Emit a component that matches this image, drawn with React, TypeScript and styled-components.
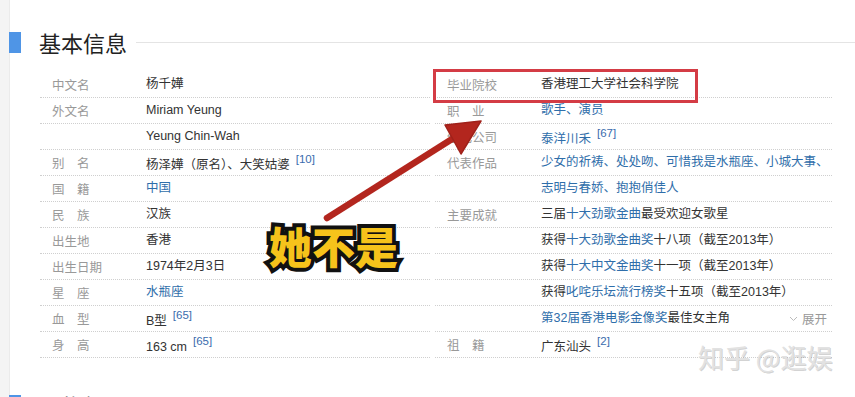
import styled, { createGlobalStyle } from "styled-components";

type Seg = { t: string; link?: boolean };
interface InfoRow {
  label: string;
  value: Seg[];
  ref?: string;
  expand?: boolean;
}

const leftRows: InfoRow[] = [
  { label: "中文名", value: [{ t: "杨千嬅" }] },
  { label: "外文名", value: [{ t: "Miriam Yeung" }] },
  { label: "", value: [{ t: "Yeung Chin-Wah" }] },
  { label: "别　名", value: [{ t: "杨泽嬅（原名）、大笑姑婆" }], ref: "10" },
  { label: "国　籍", value: [{ t: "中国", link: true }] },
  { label: "民　族", value: [{ t: "汉族" }] },
  { label: "出生地", value: [{ t: "香港" }] },
  { label: "出生日期", value: [{ t: "1974年2月3日" }] },
  { label: "星　座", value: [{ t: "水瓶座", link: true }] },
  { label: "血　型", value: [{ t: "B型" }], ref: "65" },
  { label: "身　高", value: [{ t: "163 cm" }], ref: "65" },
];

const rightRows: InfoRow[] = [
  { label: "毕业院校", value: [{ t: "香港理工大学社会科学院" }] },
  { label: "职　业", value: [{ t: "歌手、演员", link: true }] },
  { label: "经纪公司", value: [{ t: "泰洋川禾", link: true }], ref: "67" },
  {
    label: "代表作品",
    value: [{ t: "少女的祈祷、处处吻、可惜我是水瓶座、小城大事、", link: true }],
  },
  { label: "", value: [{ t: "志明与春娇、抱抱俏佳人", link: true }] },
  {
    label: "主要成就",
    value: [{ t: "三届" }, { t: "十大劲歌金曲", link: true }, { t: "最受欢迎女歌星" }],
  },
  {
    label: "",
    value: [{ t: "获得" }, { t: "十大劲歌金曲奖", link: true }, { t: "十八项（截至2013年）" }],
  },
  {
    label: "",
    value: [{ t: "获得" }, { t: "十大中文金曲奖", link: true }, { t: "十一项（截至2013年）" }],
  },
  {
    label: "",
    value: [{ t: "获得" }, { t: "叱咤乐坛流行榜奖", link: true }, { t: "十五项（截至2013年）" }],
  },
  {
    label: "",
    value: [{ t: "第32届香港电影金像奖", link: true }, { t: "最佳女主角" }],
    expand: true,
  },
  { label: "祖　籍", value: [{ t: "广东汕头" }], ref: "2" },
];

const InfoTable = ({ rows }: { rows: InfoRow[] }) => (
  <TableColumn>
    {rows.map((row, i) => (
      <Row key={i}>
        <Label>{row.label}</Label>
        <Value>
          <ValueText>
            {row.value.map((seg, j) =>
              seg.link ? <Link key={j}>{seg.t}</Link> : <span key={j}>{seg.t}</span>
            )}
            {row.ref && <Ref>[{row.ref}]</Ref>}
          </ValueText>
          {row.expand && (
            <Expand>
              <svg width="9" height="6" viewBox="0 0 9 6">
                <path d="M1 1 L4.5 4.5 L8 1" fill="none" stroke="#bbb" strokeWidth="1" />
              </svg>
              展开
            </Expand>
          )}
        </Value>
      </Row>
    ))}
  </TableColumn>
);

const App = () => {
  return (
    <>
      <GlobalStyle />
      <Page>
        <Gutter />
        <Main>
          <TitleRow>
            <Marker />
            <Title>基本信息</Title>
            <Rule />
          </TitleRow>
          <TableGrid>
            <InfoTable rows={leftRows} />
            <InfoTable rows={rightRows} />
          </TableGrid>
          <TitleRow $spaced>
            <Marker />
            <Title>人物经历</Title>
            <Rule />
          </TitleRow>
        </Main>

        <HighlightBox />
        <ArrowLayer viewBox="0 0 855 397" width="855" height="397">
          <line x1="327" y1="218" x2="460" y2="134" stroke="#b3261e" strokeWidth="6.5" strokeLinecap="round" />
          <polygon points="481,121 445,125 461,154" fill="#b3261e" stroke="#a0211a" strokeWidth="1.5" strokeLinejoin="round" />
        </ArrowLayer>
        <Caption>她不是</Caption>
        <Watermark>知乎 @逛娱</Watermark>
      </Page>
    </>
  );
};

const GlobalStyle = createGlobalStyle`
  html, body {
    margin: 0;
    padding: 0;
    background: #fff;
  }
  body {
    font-family: Arial, "Liberation Sans", "Noto Sans CJK SC", sans-serif;
    overflow: hidden;
  }
`;

const Page = styled.div`
  position: relative;
  display: flex;
  width: 855px;
  height: 397px;
  overflow: hidden;
  background: #fff;
`;

const Gutter = styled.div`
  flex-shrink: 0;
  width: 9px;
  background-color: #f4f4f4;
  border-right: 1px solid #ebebeb;
`;

const Main = styled.div`
  flex: 1;
  padding-top: 30px;
`;

const TitleRow = styled.div<{ $spaced?: boolean }>`
  display: flex;
  align-items: center;
  height: 24px;
  margin-top: ${(p) => (p.$spaced ? "35px" : "0")};
`;

const Marker = styled.div`
  width: 12px;
  height: 21px;
  margin-left: -1px;
  background-color: #4f95e6;
`;

const Title = styled.h2`
  margin: 0 9px 0 18px;
  font-family: "Noto Sans CJK SC", sans-serif;
  font-size: 22px;
  font-weight: 400;
  line-height: 24px;
  color: #222;
`;

const Rule = styled.div`
  flex: 1;
  height: 1px;
  background-color: #e4e4e4;
`;

const TableGrid = styled.div`
  display: grid;
  grid-template-columns: 390px 397px;
  column-gap: 5px;
  margin: 18px 0 0 30px;
`;

const TableColumn = styled.div`
  display: flex;
  flex-direction: column;
`;

const Row = styled.div`
  display: flex;
  align-items: center;
  height: 25px;
  padding-top: 1px;
  box-sizing: content-box;
  margin-top: -1px;
  border-bottom: 1px dotted #cfcfcf;
  font-size: 12.5px;
`;

const Label = styled.div`
  flex-shrink: 0;
  width: 94px;
  padding-left: 12px;
  color: #999;
  font-family: "Noto Sans CJK SC", sans-serif;
  white-space: nowrap;
`;

const Value = styled.div`
  flex: 1;
  display: flex;
  align-items: center;
  color: #333;
  white-space: nowrap;
`;

const ValueText = styled.span`
  line-height: 25px;
`;

const Link = styled.span`
  color: #2f6eaa;
`;

const Ref = styled.span`
  margin-left: 6px;
  font-size: 11.5px;
  color: #3a6cae;
  vertical-align: 6px;
`;

const Expand = styled.span`
  display: flex;
  align-items: center;
  gap: 4px;
  margin-left: auto;
  padding-right: 5px;
  color: #999;
  font-size: 12.5px;
`;

const HighlightBox = styled.div`
  position: absolute;
  left: 433px;
  top: 69px;
  width: 265px;
  height: 34px;
  box-sizing: border-box;
  border: 3px solid #d43c45;
`;

const ArrowLayer = styled.svg`
  position: absolute;
  left: 0;
  top: 0;
  pointer-events: none;
`;

const Caption = styled.div`
  position: absolute;
  left: 269px;
  top: 221px;
  font-family: "Noto Sans CJK SC", sans-serif;
  font-size: 43px;
  font-weight: 900;
  line-height: 48px;
  color: #f6c31b;
  -webkit-text-stroke: 8px #111;
  paint-order: stroke fill;
`;

const Watermark = styled.div`
  position: absolute;
  left: 698px;
  top: 342px;
  font-family: "Noto Sans CJK SC", sans-serif;
  font-size: 26px;
  line-height: 30px;
  color: #e2e2e2;
  text-shadow: 1px 1px 0 rgba(140, 140, 140, 0.4);
  white-space: nowrap;
`;

export default App;
